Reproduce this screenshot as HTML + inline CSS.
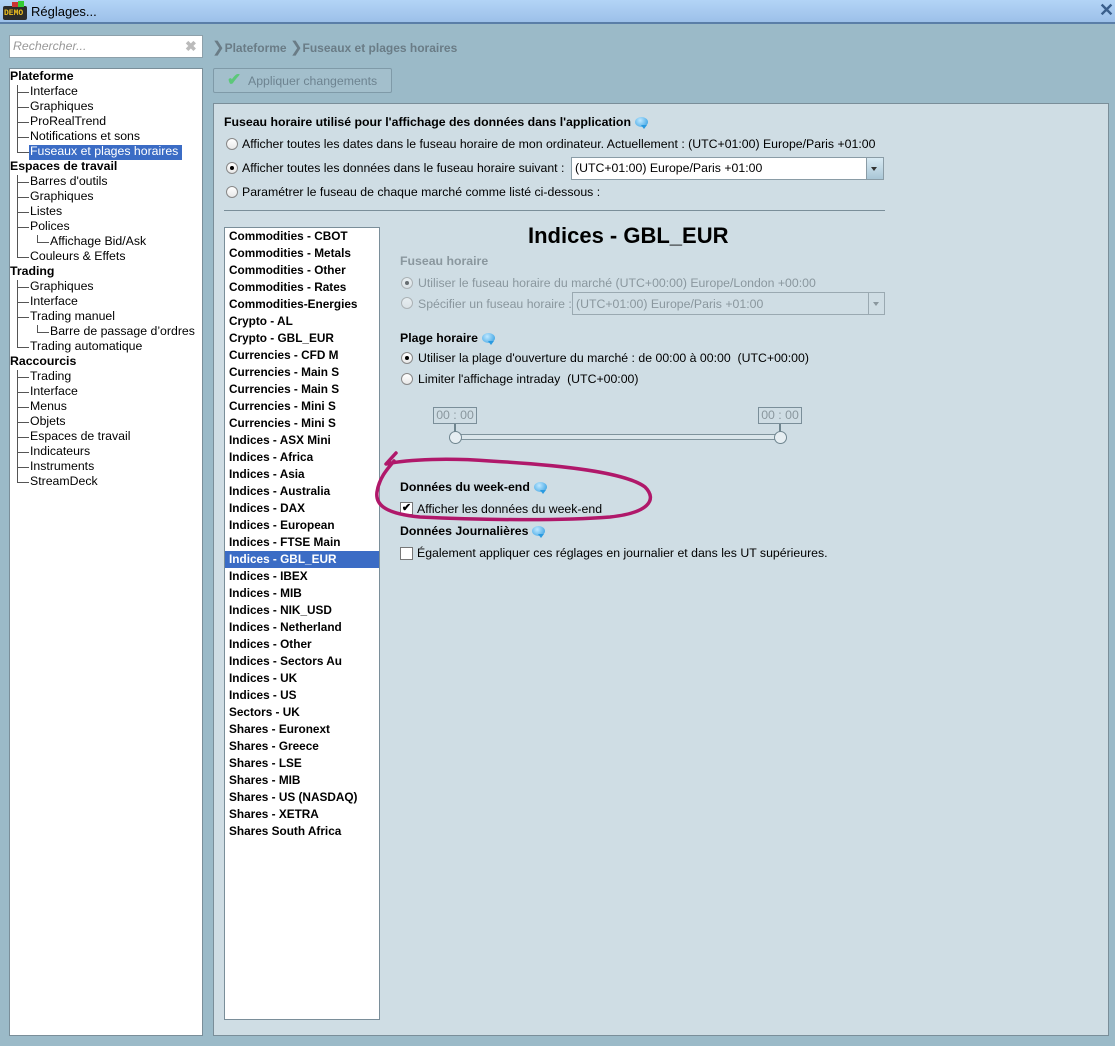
<!DOCTYPE html>
<html><head><meta charset="utf-8">
<style>
*{margin:0;padding:0;box-sizing:border-box}
body{width:1115px;height:1046px;background:#9bbac8;font-family:"Liberation Sans",sans-serif;font-size:12.3px;color:#000;position:relative;overflow:hidden}
.a{position:absolute;white-space:nowrap}
.title{left:0;top:0;width:1115px;height:24px;background:linear-gradient(#b3d4f6,#9cc0e9);border-bottom:2px solid #5a7ea8}
.t{position:absolute;height:15px;line-height:15px;white-space:nowrap}
.b{font-weight:bold}
.vl{position:absolute;width:1px;background:#555}
.hl{position:absolute;height:1px;background:#555}
.li{position:absolute;left:229px;height:17px;line-height:17px;font-weight:bold;white-space:nowrap;font-size:11.8px}
.rad{position:absolute;width:12px;height:12px;border-radius:50%;border:1px solid #888;background:linear-gradient(#fff,#e8e8e8)}
.rad.on::after{content:"";position:absolute;left:3px;top:3px;width:4px;height:4px;border-radius:50%;background:#000}
.dis{color:#8a979e}
.bubble{display:inline-block;width:13px;height:10px;border-radius:50%;background:radial-gradient(circle at 40% 35%,#bfe8ff,#2a9ae0);position:relative;vertical-align:-1px;margin-left:4px}
.bubble::after{content:"";position:absolute;left:6px;top:8px;border:3px solid transparent;border-top:4px solid #2a9ae0}
</style></head><body>
<div class="a title"></div>
<div class="a" style="left:3px;top:6px;width:24px;height:14px;background:#2b2b2b;border-radius:2px"></div>
<div class="a" style="left:4px;top:9px;font:bold 8px 'Liberation Mono',monospace;color:#f0c020">DEMO</div>
<div class="a" style="left:12px;top:2px;width:6px;height:5px;background:#c33"></div>
<div class="a" style="left:18px;top:1px;width:6px;height:6px;background:#3c3"></div>
<div class="a" style="left:31px;top:4px;font-size:13px">Réglages...</div>
<div class="a" style="left:1099px;top:0px;font-size:18px;color:#3a5f8c;font-weight:bold">✕</div>

<div class="a" style="left:9px;top:35px;width:194px;height:23px;background:#fff;border:1px solid #8da0aa"></div>
<div class="a" style="left:13px;top:39px;color:#999;font-style:italic">Rechercher...</div>
<div class="a" style="left:185px;top:38px;color:#bbb;font-size:14px;font-weight:bold">✖</div>

<div class="a" style="left:212px;top:38px;color:#6a7c86;font-weight:bold;font-size:12px"><span style="font-weight:normal;font-size:15px">❯</span>Plateforme <span style="font-weight:normal;font-size:15px">❯</span>Fuseaux et plages horaires</div>

<div class="a" style="left:9px;top:68px;width:194px;height:968px;background:#fff;border:1px solid #7a8e99"></div>
<div class="a" style="left:29px;top:145px;width:153px;height:15px;background:#3b6cc5"></div>

<div class="vl" style="left:17px;top:85px;height:68px"></div>
<div class="vl" style="left:17px;top:175px;height:83px"></div>
<div class="vl" style="left:37px;top:235px;height:8px"></div>
<div class="vl" style="left:17px;top:280px;height:68px"></div>
<div class="vl" style="left:37px;top:325px;height:8px"></div>
<div class="vl" style="left:17px;top:370px;height:113px"></div>

<div id="tree"></div>

<div class="a" style="left:213px;top:68px;width:179px;height:25px;border:1px solid #7f9aa8;border-radius:2px;background:#a3bfcc"></div>
<div class="a" style="left:227px;top:70px;color:#5cc87a;font-size:17px;font-weight:bold">✔</div>
<div class="a" style="left:248px;top:74px;color:#6d8390">Appliquer changements</div>

<div class="a" style="left:213px;top:103px;width:896px;height:933px;background:#cfdde4;border:1px solid #7a8e99"></div>
<div class="a b" style="left:224px;top:115px">Fuseau horaire utilisé pour l'affichage des données dans l'application<span class="bubble"></span></div>
<div class="rad" style="left:226px;top:138px"></div>
<div class="a" style="left:242px;top:137px">Afficher toutes les dates dans le fuseau horaire de mon ordinateur. Actuellement : (UTC+01:00) Europe/Paris +01:00</div>
<div class="rad on" style="left:226px;top:162px"></div>
<div class="a" style="left:242px;top:161px">Afficher toutes les données dans le fuseau horaire suivant :</div>
<div class="a" style="left:571px;top:157px;width:313px;height:23px;background:#fff;border:1px solid #8a9ca6"></div>
<div class="a" style="left:575px;top:161px">(UTC+01:00) Europe/Paris +01:00</div>
<div class="a" style="left:866px;top:158px;width:17px;height:21px;background:linear-gradient(#d8eaf3,#a9c6d6);border-left:1px solid #8a9ca6"></div>
<div class="a" style="left:871px;top:167px;border:3px solid transparent;border-top:4px solid #333"></div>
<div class="rad" style="left:226px;top:186px"></div>
<div class="a" style="left:242px;top:185px">Paramétrer le fuseau de chaque marché comme listé ci-dessous :</div>
<div class="a" style="left:224px;top:210px;width:661px;height:1px;background:#7a8e99"></div>

<div class="a" style="left:224px;top:227px;width:156px;height:793px;background:#fff;border:1px solid #7a8e99"></div>
<div class="a" style="left:225px;top:551px;width:154px;height:17px;background:#3b6cc5"></div>
<div id="list"></div>

<div class="a b" style="left:528px;top:223px;font-size:22px">Indices - GBL_EUR</div>
<div class="a b dis" style="left:400px;top:254px">Fuseau horaire</div>
<div class="rad on" style="left:401px;top:277px;opacity:.5"></div>
<div class="a dis" style="left:418px;top:276px">Utiliser le fuseau horaire du marché (UTC+00:00) Europe/London +00:00</div>
<div class="rad" style="left:401px;top:297px;opacity:.5"></div>
<div class="a dis" style="left:418px;top:297px">Spécifier un fuseau horaire :</div>
<div class="a" style="left:572px;top:292px;width:313px;height:23px;border:1px solid #9aa9b1"></div>
<div class="a dis" style="left:576px;top:297px">(UTC+01:00) Europe/Paris +01:00</div>
<div class="a" style="left:868px;top:293px;width:1px;height:21px;background:#9aa9b1"></div>
<div class="a" style="left:873px;top:302px;border:3px solid transparent;border-top:4px solid #8a979e"></div>

<div class="a b" style="left:400px;top:331px">Plage horaire<span class="bubble"></span></div>
<div class="rad on" style="left:401px;top:352px"></div>
<div class="a" style="left:418px;top:351px">Utiliser la plage d'ouverture du marché : de 00:00 à 00:00 &nbsp;(UTC+00:00)</div>
<div class="rad" style="left:401px;top:373px"></div>
<div class="a" style="left:418px;top:372px">Limiter l'affichage intraday &nbsp;(UTC+00:00)</div>

<div class="a dis" style="left:433px;top:407px;width:44px;height:17px;border:1px solid #7a8e99;text-align:center;line-height:15px">00 : 00</div>
<div class="a dis" style="left:758px;top:407px;width:44px;height:17px;border:1px solid #7a8e99;text-align:center;line-height:15px">00 : 00</div>
<div class="a" style="left:454px;top:424px;width:2px;height:8px;background:#6f858f"></div>
<div class="a" style="left:779px;top:424px;width:2px;height:8px;background:#6f858f"></div>
<div class="a" style="left:455px;top:434px;width:326px;height:6px;border:1px solid #7f939c;background:#dbe6eb"></div>
<div class="a" style="left:449px;top:431px;width:13px;height:13px;border-radius:50%;border:1px solid #6f858f;background:#e6eef2"></div>
<div class="a" style="left:774px;top:431px;width:13px;height:13px;border-radius:50%;border:1px solid #6f858f;background:#e6eef2"></div>

<div class="a b" style="left:400px;top:480px">Données du week-end<span class="bubble"></span></div>
<div class="a" style="left:400px;top:502px;width:13px;height:13px;border:1px solid #777;background:#fff;font-size:11px;line-height:11px;text-align:center;font-weight:bold">✔</div>
<div class="a" style="left:417px;top:502px">Afficher les données du week-end</div>
<div class="a b" style="left:400px;top:524px">Données Journalières<span class="bubble"></span></div>
<div class="a" style="left:400px;top:547px;width:13px;height:13px;border:1px solid #777;background:#fff"></div>
<div class="a" style="left:417px;top:546px">Également appliquer ces réglages en journalier et dans les UT supérieures.</div>

<svg class="a" style="left:0;top:0" width="1115" height="1046">
<path d="M396 453 L386 464 C410 459,450 458,490 461 C560 465,625 472,645 487 C658 500,648 513,610 517 C560 521,480 520,420 517 C388 514,375 506,377 492 C379 478,388 468,394 461" fill="none" stroke="#b0186a" stroke-width="3.5" stroke-linecap="round" stroke-linejoin="round"/>
</svg>

<script>
const tree=[["Plateforme",0,1],["Interface",1],["Graphiques",1],["ProRealTrend",1],["Notifications et sons",1],["Fuseaux et plages horaires",1,0,1],["Espaces de travail",0,1],["Barres d'outils",1],["Graphiques",1],["Listes",1],["Polices",1],["Affichage Bid/Ask",2],["Couleurs & Effets",1],["Trading",0,1],["Graphiques",1],["Interface",1],["Trading manuel",1],["Barre de passage d’ordres",2],["Trading automatique",1],["Raccourcis",0,1],["Trading",1],["Interface",1],["Menus",1],["Objets",1],["Espaces de travail",1],["Indicateurs",1],["Instruments",1],["StreamDeck",1]];
let h="";tree.forEach((r,i)=>{const c=77+i*15;const x=r[1]==0?10:r[1]==1?30:50;
if(r[1]>0)h+=`<div class="hl" style="left:${r[1]==1?17:37}px;top:${c}px;width:12px"></div>`;
h+=`<div class="t${r[2]?' b':''}" style="left:${x}px;top:${c-8}px;${r[3]?'color:#fff':''}">${r[0]}</div>`;});
document.getElementById('tree').innerHTML=h;
const L=["Commodities - CBOT","Commodities - Metals","Commodities - Other","Commodities - Rates","Commodities-Energies","Crypto - AL","Crypto - GBL_EUR","Currencies - CFD M","Currencies - Main S","Currencies - Main S","Currencies - Mini S","Currencies - Mini S","Indices - ASX Mini","Indices - Africa","Indices - Asia","Indices - Australia","Indices - DAX","Indices - European","Indices - FTSE Main","Indices - GBL_EUR","Indices - IBEX","Indices - MIB","Indices - NIK_USD","Indices - Netherland","Indices - Other","Indices - Sectors Au","Indices - UK","Indices - US","Sectors - UK","Shares - Euronext","Shares - Greece","Shares - LSE","Shares - MIB","Shares - US (NASDAQ)","Shares - XETRA","Shares South Africa"];
let g="";L.forEach((s,i)=>{g+=`<div class="li" style="top:${228+i*17}px;${i==19?'color:#fff':''}">${s}</div>`});
document.getElementById('list').innerHTML=g;
</script>
</body></html>
